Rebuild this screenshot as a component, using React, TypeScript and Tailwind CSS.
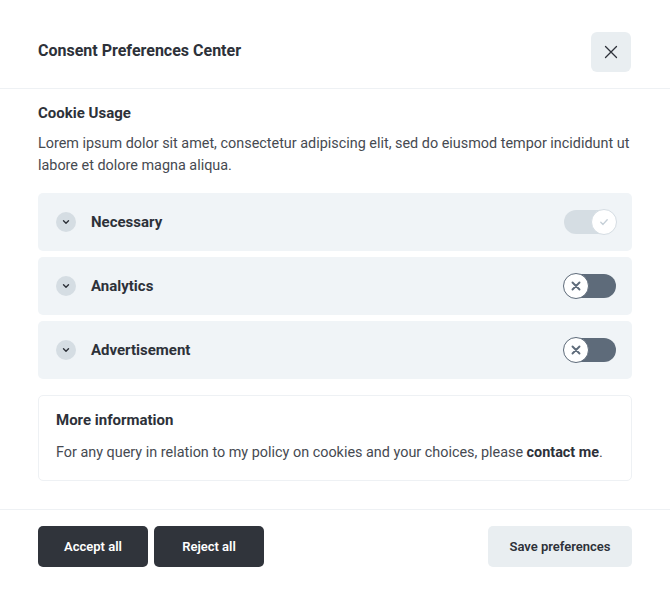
import React from "react";

function Chevron() {
  return (
    <span className="w-5 h-5 rounded-full bg-[#d5dde3] flex items-center justify-center shrink-0">
      <svg width="10" height="10" viewBox="0 0 10 10" fill="none">
        <path d="M2.5 3.8L5 6.3L7.5 3.8" stroke="#2d3139" strokeWidth="1.4" strokeLinecap="round" strokeLinejoin="round" />
      </svg>
    </span>
  );
}

function Toggle({ on }: { on: boolean }) {
  if (on) {
    return (
      <span className="relative w-[52px] h-6 rounded-full bg-[#d5dde3] block shrink-0">
        <span className="absolute -right-px -top-px w-[26px] h-[26px] rounded-full bg-white border border-[#d5dde3] flex items-center justify-center">
          <svg width="12" height="12" viewBox="0 0 12 12" fill="none">
            <path d="M2.8 6.3L5 8.4L9.2 3.8" stroke="#c5cfd7" strokeWidth="1.4" strokeLinecap="round" strokeLinejoin="round" />
          </svg>
        </span>
      </span>
    );
  }
  return (
    <span className="relative w-[52px] h-6 rounded-full bg-[#5e6b7a] block shrink-0">
      <span className="absolute -left-px -top-px w-[26px] h-[26px] rounded-full bg-white border border-[#5e6b7a] flex items-center justify-center">
        <svg width="10" height="10" viewBox="0 0 10 10" fill="none">
          <path d="M1.5 1.5L8.5 8.5M8.5 1.5L1.5 8.5" stroke="#5e6b7a" strokeWidth="1.9" strokeLinecap="round" />
        </svg>
      </span>
    </span>
  );
}

function Row({ label, on }: { label: string; on: boolean }) {
  return (
    <div className="h-[58px] rounded-[5px] bg-[#f0f4f7] flex items-center pl-[18px] pr-[16px]">
      <Chevron />
      <span className="ml-[15px] text-[15px] font-bold text-[#2d3139] flex-1">{label}</span>
      <Toggle on={on} />
    </div>
  );
}

export default function App() {
  return (
    <div className="w-[670px] h-[600px] bg-white text-[#2d3139]" style={{ fontFamily: "Roboto, 'Liberation Sans', sans-serif" }}>
      <div className="h-[89px] flex items-center justify-between pl-[38px] pr-[39px] border-b border-[#eef1f4] pt-[16px]">
        <h2 className="text-[16px] font-bold text-[#2d3139] -mt-[3px]">Consent Preferences Center</h2>
        <button className="w-10 h-10 rounded-[6px] bg-[#e9eef1] flex items-center justify-center">
          <svg width="14" height="14" viewBox="0 0 14 14" fill="none">
            <path d="M1.5 1.5L12.5 12.5M12.5 1.5L1.5 12.5" stroke="#2d3139" strokeWidth="1.3" strokeLinecap="round" />
          </svg>
        </button>
      </div>
      <div className="px-[38px] pt-[14px] pb-[28px] border-b border-[#eef1f4]">
        <div className="text-[15px] font-bold text-[#2d3139] leading-[20px]">Cookie Usage</div>
        <p className="mt-[10px] text-[14.4px] leading-[22px] text-[#464a51]">
          Lorem ipsum dolor sit amet, consectetur adipiscing elit, sed do eiusmod tempor incididunt ut labore et dolore magna aliqua.
        </p>
        <div className="mt-[16px] flex flex-col gap-[6px]">
          <Row label="Necessary" on={true} />
          <Row label="Analytics" on={false} />
          <Row label="Advertisement" on={false} />
        </div>
        <div className="mt-[16px] border border-[#eef1f4] rounded-[5px] px-[17px] pt-[13px] pb-[16px]">
          <div className="text-[15px] font-bold text-[#2d3139] leading-[22px]">More information</div>
          <p className="mt-[11px] text-[14.4px] leading-[22px] text-[#464a51]">
            For any query in relation to my policy on cookies and your choices, please{" "}
            <a className="font-bold text-[#2d3139]">contact me</a>.
          </p>
        </div>
      </div>
      <div className="px-[38px] pt-[16px] flex items-center">
        <div className="flex gap-[6px]">
          <button className="w-[110px] h-[41px] rounded-[5px] bg-[#30343b] text-white text-[13px] font-semibold">Accept all</button>
          <button className="w-[110px] h-[41px] rounded-[5px] bg-[#30343b] text-white text-[13px] font-semibold">Reject all</button>
        </div>
        <button className="ml-auto w-[144px] h-[41px] rounded-[5px] bg-[#e9eef1] text-[#2d3139] text-[13px] font-semibold">Save preferences</button>
      </div>
    </div>
  );
}
